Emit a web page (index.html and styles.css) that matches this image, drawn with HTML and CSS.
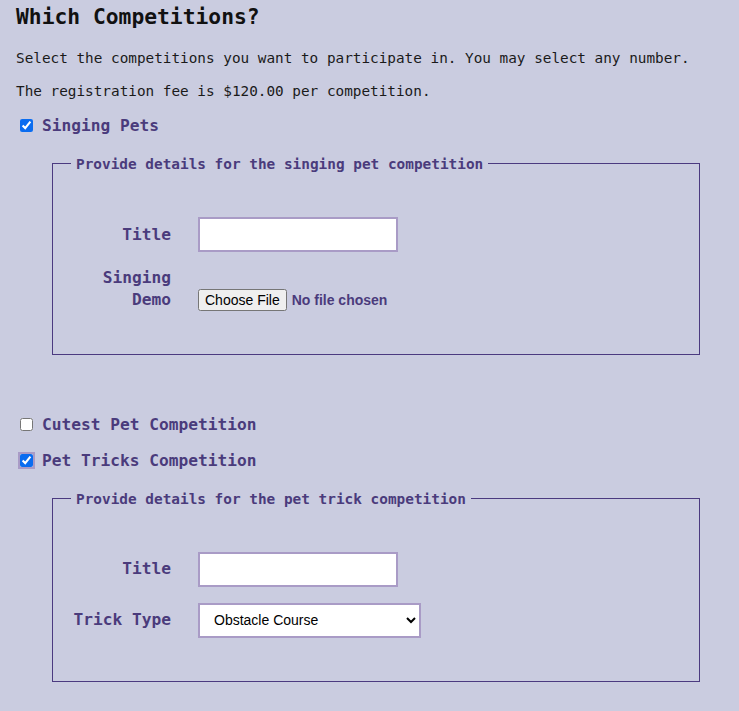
FILE: index.html
```html
<!DOCTYPE html>
<html lang="en">
<head>
<meta charset="utf-8">
<title>Which Competitions?</title>
<link rel="stylesheet" href="styles.css">
</head>
<body>
<main class="page">
  <h1 class="heading">Which Competitions?</h1>
  <p class="intro">Select the competitions you want to participate in. You may select any number.</p>
  <p class="intro">The registration fee is $120.00 per competition.</p>

  <label class="choice"><input type="checkbox" checked><span>Singing Pets</span></label>
  <fieldset class="details">
    <legend>Provide details for the singing pet competition</legend>
    <div class="row">
      <label class="row-label" for="sing-title">Title</label>
      <input class="text-input" id="sing-title" type="text">
    </div>
    <div class="row">
      <label class="row-label" for="sing-demo">Singing Demo</label>
      <input class="file-input" id="sing-demo" type="file">
    </div>
  </fieldset>

  <label class="choice choice-gap"><input type="checkbox"><span>Cutest Pet Competition</span></label>
  <label class="choice"><input class="focused" type="checkbox" checked><span>Pet Tricks Competition</span></label>
  <fieldset class="details details-last">
    <legend>Provide details for the pet trick competition</legend>
    <div class="row">
      <label class="row-label" for="trick-title">Title</label>
      <input class="text-input" id="trick-title" type="text">
    </div>
    <div class="row">
      <label class="row-label" for="trick-type">Trick Type</label>
      <select class="select-input" id="trick-type">
        <option>Obstacle Course</option>
        <option>Jumping</option>
        <option>Fetch</option>
      </select>
    </div>
  </fieldset>
</main>
</body>
</html>
```

FILE: styles.css
```css
html, body {
  margin: 0;
  padding: 0;
  background: #cacce0;
}

body {
  font-family: "DejaVu Sans Mono", "Liberation Mono", monospace;
  color: #1a1a1a;
}

.page {
  padding: 0 16px 40px;
}

.heading {
  font-size: 21.3px;
  font-weight: bold;
  line-height: 34px;
  margin: 0 0 14px;
  color: #111;
}

.intro {
  font-size: 14.35px;
  line-height: 20px;
  margin: 0 0 13px;
}

.choice {
  display: flex;
  align-items: center;
  gap: 6px;
  height: 22px;
  font-size: 16.2px;
  font-weight: bold;
  color: #4a3b7c;
}

.choice input {
  width: 13px;
  height: 13px;
  margin: 0 3px 0 4px;
  accent-color: #0a6cf0;
}

.choice input.focused {
  outline: 2px solid #a99bc6;
  outline-offset: 0;
}

.choice-gap {
  margin-top: 58px;
  margin-bottom: 14px;
}

.details {
  margin: 17.5px 23px 0 36px;
  padding: 43.5px 18px 43px;
  border: 1px solid #4b3a80;
  display: flex;
  flex-direction: column;
  gap: 15px;
}

.details-last {
  gap: 16px;
  padding-top: 43px;
  padding-bottom: 43.5px;
}

.details legend {
  padding: 0 5px;
  font-size: 14.4px;
  line-height: 20px;
  font-weight: bold;
  color: #4a3b7c;
}

.row {
  display: flex;
  align-items: last baseline;
  gap: 27px;
}

.row-label {
  width: 100px;
  flex: none;
  text-align: right;
  font-size: 16.2px;
  line-height: 22px;
  font-weight: bold;
  color: #4a3b7c;
}

.text-input {
  box-sizing: border-box;
  width: 200px;
  height: 35px;
  margin: 0;
  border: 2px solid #a99bc6;
  background: #fff;
  padding: 0 8px;
  font-family: "Liberation Sans", Arial, sans-serif;
  font-size: 14px;
}

.file-input {
  margin: 0;
  font-family: "Liberation Sans", Arial, sans-serif;
  font-size: 14px;
  font-weight: bold;
  color: #4a3b7c;
}

.file-input::file-selector-button {
  font-family: "Liberation Sans", Arial, sans-serif;
  font-size: 14px;
  font-weight: normal;
  color: #000;
  padding: 1px 5px;
  margin-right: 5px;
}

.select-input {
  box-sizing: border-box;
  width: 223px;
  height: 35px;
  margin: 0;
  border: 2px solid #a99bc6;
  border-radius: 0;
  background: #fff;
  padding: 0 8px 0 10px;
  font-family: "Liberation Sans", Arial, sans-serif;
  font-size: 14px;
  color: #000;
}
```
